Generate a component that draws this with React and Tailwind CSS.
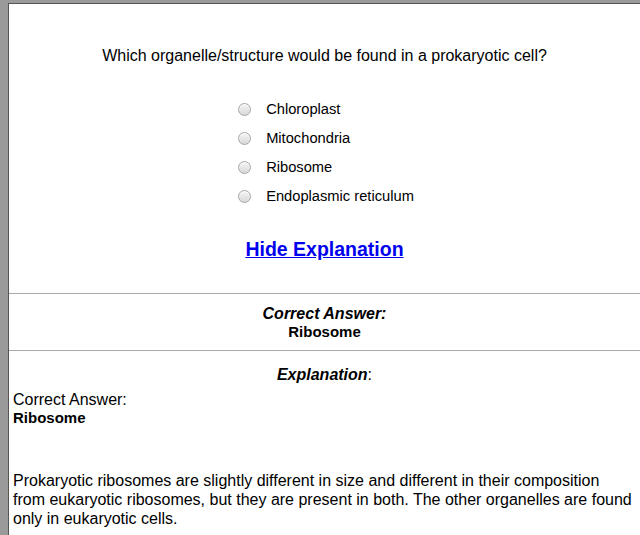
import React from "react";

function Radio() {
  return (
    <span className="inline-block w-[13px] h-[13px] rounded-full border border-[#a6a6a6] bg-[linear-gradient(#f5f5f5,#d9d9d9)] shadow-[inset_0_1px_1px_rgba(255,255,255,0.8)]" />
  );
}

const options = ["Chloroplast", "Mitochondria", "Ribosome", "Endoplasmic reticulum"];

export default function App() {
  return (
    <div className="h-[535px] w-[640px] overflow-hidden bg-[#9a9a9a] pl-2 pt-[3px] font-['Liberation_Sans',Arial,sans-serif] text-black">
      <div className="h-full border-l border-t border-[#555] bg-white">
        <div className="pt-[43px] text-center text-[16px] leading-[18px]">
          Which organelle/structure would be found in a prokaryotic cell?
        </div>
        <div className="mt-[30px] flex justify-center">
          <div className="ml-[3px] flex flex-col">
            {options.map((o) => (
              <label key={o} className="flex h-[29px] items-center">
                <span className="flex w-[28px] justify-start">
                  <Radio />
                </span>
                <span className="text-[14.7px]">{o}</span>
              </label>
            ))}
          </div>
        </div>
        <div className="mt-[27px] text-center text-[19.5px] leading-[23px] font-bold">
          <a href="#" className="text-[#0000ee] underline">Hide Explanation</a>
        </div>
        <div className="mt-[32px] border-t border-[#aaa]" />
        <div className="pt-[11px] pb-[10px] text-center">
          <div className="text-[16px] leading-[18px] font-bold italic">Correct Answer:</div>
          <div className="text-[15px] leading-[17px] font-bold">Ribosome</div>
        </div>
        <div className="border-t border-[#aaa]" />
        <div className="pt-[15px] text-center text-[16px] leading-[18px]">
          <span className="font-bold italic">Explanation</span>:
        </div>
        <div className="pl-1">
          <div className="mt-[7px] text-[16px] leading-[18px]">Correct Answer:</div>
          <div className="text-[15px] leading-[18px] font-bold">Ribosome</div>
          <p className="mt-[44px] w-[620px] text-[16px] leading-[19px]">
            Prokaryotic ribosomes are slightly different in size and different in their composition from eukaryotic ribosomes, but they are present in both. The other organelles are found only in eukaryotic cells.
          </p>
        </div>
      </div>
    </div>
  );
}
